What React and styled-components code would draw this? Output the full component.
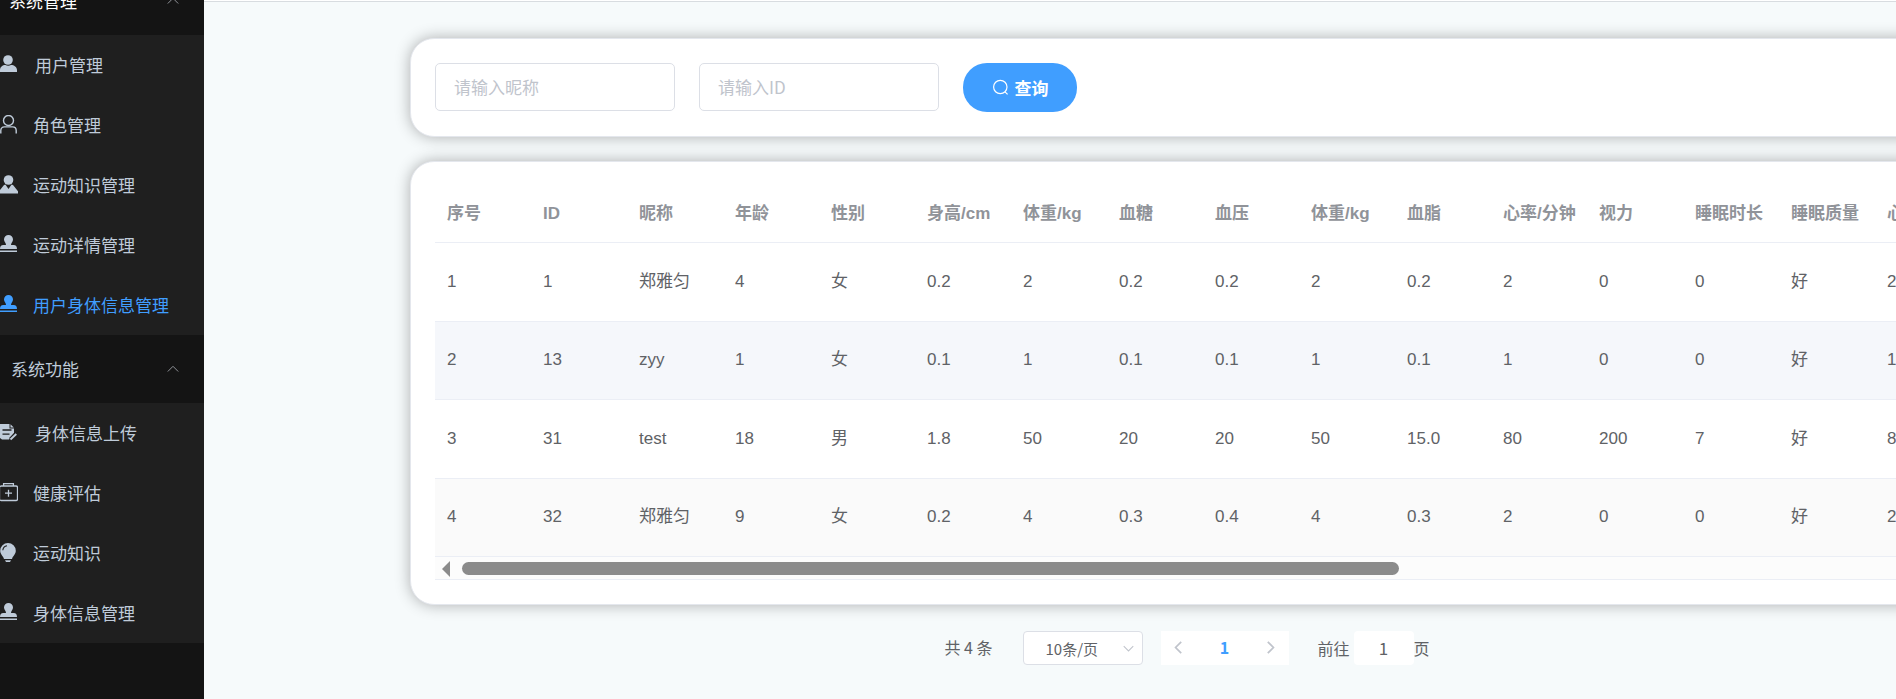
import React, { useState } from 'react';
import styled, { createGlobalStyle } from 'styled-components';

const menus = [
    {
        title: '系统管理',
        inset: 9,
        active: true,
        items: [
            { name: '用户管理', icon: 'user' },
            { name: '角色管理', icon: 'role' },
            { name: '运动知识管理', icon: 'custom' },
            { name: '运动详情管理', icon: 'stamp' },
            { name: '用户身体信息管理', icon: 'stamp' },
        ]
    },
    {
        title: '系统功能',
        inset: 11,
        items: [
            { name: '身体信息上传', icon: 'order' },
            { name: '健康评估', icon: 'aid' },
            { name: '运动知识', icon: 'bulb' },
            { name: '身体信息管理', icon: 'stamp' },
        ]
    },
];

const columns = [
    '序号', 'ID', '昵称', '年龄', '性别', '身高/cm', '体重/kg', '血糖', '血压',
    '体重/kg', '血脂', '心率/分钟', '视力', '睡眠时长', '睡眠质量', '心率'
];

const rows = [
    ['1', '1', '郑雅匀', '4', '女', '0.2', '2', '0.2', '0.2', '2', '0.2', '2', '0', '0', '好', '2'],
    ['2', '13', 'zyy', '1', '女', '0.1', '1', '0.1', '0.1', '1', '0.1', '1', '0', '0', '好', '1'],
    ['3', '31', 'test', '18', '男', '1.8', '50', '20', '20', '50', '15.0', '80', '200', '7', '好', '80'],
    ['4', '32', '郑雅匀', '9', '女', '0.2', '4', '0.3', '0.4', '4', '0.3', '2', '0', '0', '好', '2'],
];

const shapes = {
    user: (
        <>
            <circle cx="8" cy="5" r="4.8" />
            <path d="M0 17v-2c0-3 2.6-5 5.4-5 1.6 1.1 4 1.1 5.6 0 3 0 6 2 6 5v2z" />
        </>
    ),
    role: (
        <g fill="none" stroke="currentColor" strokeWidth="1.4">
            <circle cx="8.5" cy="5.5" r="5" />
            <path d="M.8 18.500v-3c0-2.200 1.400-3.600 3.600-3.600h8.200c2.200 0 3.600 1.400 3.600 3.600v3" />
        </g>
    ),
    custom: (
        <>
            <circle cx="8.500" cy="5" r="4.800" />
            <path d="M0 18.500v-3.500l4-5 1.400-.4 3.100 4.400 3.100-4.400 1.400.4 5 6.200v2.300z" />
        </>
    ),
    stamp: (
        <>
            <path d="M8.500 0a4.500 4.500 0 0 1 4.500 4.500c0 2.200-2 3-2 5.500h2.600c2.400 0 3.400 1.400 3.400 4H0c0-2.600 1-4 3.400-4H6c0-2.500-2-3.300-2-5.500A4.500 4.500 0 0 1 8.500 0z" />
            <path d="M0 15.500h17V17H0z" />
        </>
    ),
    order: (
        <>
            <path d="M0 1h9.500v4.500H14V10l-5 6.500H2L0 15z" />
            <path d="M10.500 1.200 13.800 4.500h-3.300z" />
            <path d="M2.500 7h9M2.500 11.200h7" stroke="#1f1f1f" strokeWidth="1.300" />
            <path d="m10.500 16.500 6-6" stroke="#1f1f1f" strokeWidth="4" />
            <path d="m10.500 16.500 5.800-5.500" stroke="currentColor" strokeWidth="1.900" />
        </>
    ),
    aid: (
        <g fill="none" stroke="currentColor" strokeWidth="1.300">
            <rect x="-.5" y="3" width="18" height="14.500" rx="1.600" />
            <path d="M3.600 3V.7h9.800V3M8.500 6.700v7M5 10.200h7" />
        </g>
    ),
    bulb: (
        <>
            <path d="M8 0a7.800 7.800 0 0 1 7.800 7.800c0 3.600-2.800 5-3.800 8.200H4C3 12.800.2 11.400.2 7.800A7.800 7.800 0 0 1 8 0z" />
            <path d="M5 17.200h6l-1 1.700H6z" />
            <path d="M2.800 7.200C3.100 4.800 4.600 3.200 7 2.800" fill="none" stroke="#1f1f1f" strokeWidth="1.100" />
        </>
    ),
};

const Glyph = ({ name }) => (
    <GlyphSvg viewBox="0 0 18 19" aria-hidden="true">{shapes[name]}</GlyphSvg>
)

const Chevron = ({ d, size, width }) => (
    <svg width={size} height={size} viewBox="0 0 12 12" fill="none" stroke="currentColor" strokeWidth={width} aria-hidden="true">
        <path d={d} />
    </svg>
)

const SideMenu = ({ current, onSelect }) => (
    <Sidebar>
        {
            menus.map(menu => (
                <section key={menu.title}>
                    <GroupTitle type="button" $inset={menu.inset} $active={menu.active}>
                        {menu.title}
                        <Chevron d="M.8 9.500 6 4.300l5.200 5.200" size={12} width={1} />
                    </GroupTitle>
                    <GroupList>
                        {
                            menu.items.map(item => (
                                <li key={item.name}>
                                    <MenuLink
                                        href="#"
                                        $active={current == item.name}
                                        onClick={() => onSelect(item.name)}>
                                        <Glyph name={item.icon} />
                                        {item.name}
                                    </MenuLink>
                                </li>
                            ))
                        }
                    </GroupList>
                </section>
            ))
        }
    </Sidebar>
)

const InfoTable = () => (
    <TableWrap>
        <Table>
            <thead>
                <tr>{columns.map((col, i) => <th key={i} scope="col">{col}</th>)}</tr>
            </thead>
            <tbody>
                {
                    rows.map(row => (
                        <Row key={row[0]} $hover={row[0] == '2'}>
                            {row.map((value, i) => <td key={i}>{value}</td>)}
                        </Row>
                    ))
                }
            </tbody>
        </Table>
        <ScrollTrack>
            <svg width="8" height="16" viewBox="0 0 8 16" aria-hidden="true"><path d="M8 0v16L0 8z" fill="#8b8b8b" /></svg>
            <ScrollLane><ScrollThumb /></ScrollLane>
        </ScrollTrack>
    </TableWrap>
)

const Pager = () => {
    const [page, setPage] = useState('1');

    return (
        <Pagination>
            <Total>共 4 条</Total>
            <SizeBox>
                <SizeSelect aria-label="每页条数" defaultValue="10">
                    <option value="10">10条/页</option>
                    <option value="20">20条/页</option>
                </SizeSelect>
                <SizeArrow><Chevron d="M.8 3.500 6 8.700l5.200-5.200" size={11} width={1.1} /></SizeArrow>
            </SizeBox>
            <PageButtons>
                <PageButton type="button" aria-label="上一页" disabled>
                    <Chevron d="M8.500.8 3.300 6l5.200 5.200" size={13} width={1.6} />
                </PageButton>
                <PageButton type="button" $active>1</PageButton>
                <PageButton type="button" aria-label="下一页" disabled>
                    <Chevron d="M3.500.8 8.700 6l-5.200 5.200" size={13} width={1.6} />
                </PageButton>
            </PageButtons>
            <Jump>
                <span>前往</span>
                <JumpInput value={page} onChange={e => setPage(e.target.value)} />
                页
            </Jump>
        </Pagination>
    )
}

const App = () => {
    const [current, setCurrent] = useState('用户身体信息管理');

    return (
        <Layout>
            <GlobalStyle />
            <SideMenu current={current} onSelect={setCurrent} />
            <Main>
                <Content>
                    <Card>
                        <SearchForm onSubmit={e => e.preventDefault()}>
                            <SearchInput placeholder="请输入昵称" aria-label="昵称" />
                            <SearchInput placeholder="请输入ID" aria-label="ID" />
                            <SearchButton>
                                <svg width="17" height="17" viewBox="0 0 17 17" fill="none" stroke="currentColor" strokeWidth="1.200" aria-hidden="true">
                                    <circle cx="8.300" cy="8" r="6.700" />
                                    <path d="m13 12.800 2.600 2.600" />
                                </svg>
                                查询
                            </SearchButton>
                        </SearchForm>
                    </Card>
                    <Card>
                        <InfoTable />
                    </Card>
                    <Pager />
                </Content>
            </Main>
        </Layout>
    )
}

const GlobalStyle = createGlobalStyle`
    * {
        box-sizing: border-box;
    }
    body {
        margin: 0;
        overflow: hidden;
        font-family: "Liberation Sans", "Noto Sans CJK SC", sans-serif;
        font-size: 17px;
        color: #606266;
    }
    button, input, select {
        font-family: "Noto Sans CJK SC", sans-serif;
    }
`;

const Layout = styled.div`
    display: flex;
    height: 100vh;
    overflow: hidden;
`;

/* the menu is scrolled half a title down */
const Sidebar = styled.nav`
    flex: none;
    width: 204px;
    height: calc(100% + 33px);
    margin-top: -33px;
    background: #141414;
    font-family: "Noto Sans CJK SC", sans-serif;
`;

const GroupTitle = styled.button`
    display: flex;
    align-items: center;
    justify-content: space-between;
    width: 100%;
    height: 68px;
    padding: 0 25px 2px ${props => props.$inset}px;
    border: 0;
    background: none;
    font-size: 17px;
    color: ${props => props.$active ? '#fff' : '#bfcbd9'};
    svg {
        color: #909399;
    }
`;

const GroupList = styled.ul`
    margin: 0;
    padding: 0;
    list-style: none;
    background: #1f1f1f;
    li:first-child a {
        gap: 17px;
    }
`;

const MenuLink = styled.a`
    display: flex;
    align-items: center;
    gap: 15px;
    height: 60px;
    padding-bottom: 2px;
    text-decoration: none;
    white-space: nowrap;
    color: ${props => props.$active ? '#409eff' : '#bfcbd9'};
`;

const GlyphSvg = styled.svg`
    flex: none;
    width: 18px;
    height: 19px;
    fill: currentColor;
`;

const Main = styled.main`
    flex: 1;
    min-width: 0;
    padding: 36px 0 0 206px;
    overflow: hidden;
    background: #f6fafb;
    border-top: 1px solid #fff;
    box-shadow: inset 0 1px #d8dce0;
`;

/* wider than the window, the right end is cut off */
const Content = styled.div`
    display: flex;
    flex-direction: column;
    gap: 24px;
    margin-top: 1px;
    margin-right: -68px;
`;

const Card = styled.section`
    padding: 24px;
    border: 1px solid #e4e7ed;
    border-radius: 24px;
    background: #fff;
    box-shadow: 0 0 15px rgba(0, 0, 0, 0.3);
`;

const SearchForm = styled.form`
    display: flex;
    gap: 24px;
`;

const SearchInput = styled.input`
    width: 240px;
    height: 48px;
    padding: 0 18px 2px;
    border: 1px solid #dcdfe6;
    border-radius: 5px;
    font-size: 17px;
    color: #606266;
    &::placeholder {
        color: #c0c4cc;
    }
`;

const SearchButton = styled.button`
    display: flex;
    align-items: center;
    justify-content: center;
    gap: 6px;
    width: 114px;
    height: 49px;
    padding: 0 0 1px;
    border: 0;
    border-radius: 24px;
    background: #409eff;
    font-size: 17px;
    font-weight: 700;
    color: #fff;
`;

const TableWrap = styled.div`
    overflow: hidden;
    border-bottom: 1px solid #ebeef5;
`;

const Table = styled.table`
    width: 1536px;
    height: 371px;
    table-layout: fixed;
    border-collapse: separate;
    border-spacing: 0;
    line-height: 24px;
    th, td {
        padding: 0 0 0 12px;
        border-bottom: 1px solid #ebeef5;
        text-align: left;
        white-space: nowrap;
    }
    th {
        height: 57px;
        color: #909399;
    }
`;

const Row = styled.tr`
    background: ${props => props.$hover ? '#f5f7fb' : '#fff'};
    &:nth-child(4) {
        background: #fafafa;
    }
`;

const ScrollTrack = styled.div`
    display: flex;
    align-items: center;
    gap: 12px;
    height: 22px;
    padding: 1px 13px 0 7px;
    background: #fcfcfc;
`;

const ScrollLane = styled.div`
    flex: 1;
`;

const ScrollThumb = styled.div`
    width: 64%;
    height: 13px;
    border-radius: 7px;
    background: #8b8b8b;
`;

const Pagination = styled.div`
    display: flex;
    align-items: center;
    justify-content: center;
    height: 34px;
    margin-top: 2px;
    font-family: "Noto Sans CJK SC", sans-serif;
    font-size: 16px;
`;

const Total = styled.span`
    padding-bottom: 3px;
    margin-right: 30px;
`;

const SizeBox = styled.div`
    position: relative;
    margin-right: 18px;
`;

const SizeSelect = styled.select`
    display: block;
    width: 120px;
    height: 34px;
    padding: 0 22px;
    appearance: none;
    border: 1px solid #dcdfe6;
    border-radius: 4px;
    background: #fff;
    font-size: 15px;
    color: #606266;
`;

const SizeArrow = styled.span`
    position: absolute;
    top: 0;
    right: 9px;
    display: flex;
    align-items: center;
    height: 100%;
    color: #c0c4cc;
    pointer-events: none;
`;

const PageButtons = styled.div`
    display: flex;
    margin-right: 29px;
    background: #fff;
`;

const PageButton = styled.button`
    display: flex;
    align-items: center;
    justify-content: center;
    width: ${props => props.$active ? 56 : 36}px;
    height: 34px;
    padding: 0 0 2px;
    border: 0;
    background: none;
    font-size: 16px;
    font-weight: 700;
    color: ${props => props.$active ? '#409eff' : '#c0c4cc'};
`;

const Jump = styled.label`
    display: flex;
    align-items: center;
    span {
        margin-right: 4px;
    }
`;

const JumpInput = styled.input`
    width: 60px;
    height: 34px;
    padding: 0 0 2px;
    border: 0;
    border-radius: 4px;
    background: #fff;
    font-size: 17px;
    text-align: center;
    color: #606266;
`;

export default App;
